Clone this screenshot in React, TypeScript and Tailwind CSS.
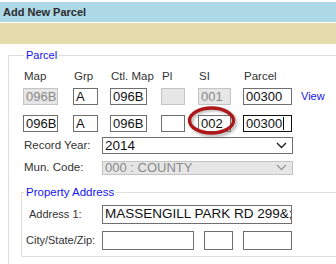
const font = "font-['Liberation_Sans',Arial,sans-serif]"

const cols = [
  'w-[35px]',
  'w-[25px] ml-[15px]',
  'w-[37px] ml-[12px]',
  'w-[24px] ml-[14px]',
  'w-[33px] ml-[13px]',
  'w-[49px] ml-[12px]',
]

/** Text box drawn as a plain div so the caret and borders stay fixed */
function Box({ value, disabled, focused, className = '' }: { value?: string; disabled?: boolean; focused?: boolean; className?: string }) {
  let look = 'bg-white border-[#6f6f6f] text-[#111]'
  if (disabled) look = 'bg-[#e6e6e6] border-[#c4c4c4] text-[#8a8a8a]'
  if (focused) look = 'bg-white border-[#111] text-[#111]'
  return (
    <div className={`flex items-center overflow-hidden whitespace-nowrap border pl-[2px] ${look} ${className}`}>
      {value}
      {focused && <span className="ml-[1px] inline-block h-[13px] w-px bg-black" />}
    </div>
  )
}

function Chevron({ color }: { color: string }) {
  return (
    <svg width="11" height="7" viewBox="0 0 11 7" className="mr-[5px]">
      <path d="M1 1l4.5 4.5L10 1" fill="none" stroke={color} strokeWidth="1.4" />
    </svg>
  )
}

function Select({ value, disabled, className = '' }: { value: string; disabled?: boolean; className?: string }) {
  const look = disabled ? 'bg-[#e6e6e6] border-[#c4c4c4] text-[#8a8a8a]' : 'bg-white border-[#6f6f6f] text-[#111]'
  return (
    <div className={`flex w-[191px] items-center justify-between border pl-[2px] ${look} ${className}`}>
      <span>{value}</span>
      <Chevron color={disabled ? '#9a9a9a' : '#222'} />
    </div>
  )
}

export default function App() {
  return (
    <div className={`relative h-[264px] w-[336px] overflow-hidden bg-white text-[#333] ${font}`}>
      <div className="mt-[2px] flex h-[20px] items-center bg-[#add8e6] pl-[3px] text-[11px] font-bold text-[#2b2b2b]">Add New Parcel</div>
      <div className="mt-[1px] h-[21px] bg-[#e6dcae]" />

      <fieldset className="ml-[8px] mt-[5px] w-[380px] border border-[#dedede] pb-[20px] pl-[12px]">
        <legend className="ml-[3px] px-[2px] text-[11px] leading-[13px] text-[#1414f0]">Parcel</legend>

        <div className="mt-[7px] flex pl-[2px] text-[11.5px] leading-[14px]">
          {['Map', 'Grp', 'Ctl. Map', 'Pl', 'SI', 'Parcel'].map((t, i) => (
            <div key={t} className={`${cols[i]} whitespace-nowrap pl-[1px]`}>
              {t}
            </div>
          ))}
        </div>

        <div className="mt-[5px] flex items-center pl-[2px] text-[13px]">
          <Box className={`${cols[0]} h-[17px]`} value="096B" disabled />
          <Box className={`${cols[1]} h-[17px]`} value="A" />
          <Box className={`${cols[2]} h-[17px]`} value="096B" />
          <Box className={`${cols[3]} h-[17px]`} disabled />
          <Box className={`${cols[4]} h-[17px]`} value="001" disabled />
          <Box className={`${cols[5]} h-[17px]`} value="00300" />
          <span className="ml-[9px] text-[11px] text-[#1414f0]">View</span>
        </div>

        <div className="mt-[10px] flex items-center pl-[2px] text-[13px]">
          <Box className={`${cols[0]} h-[17px]`} value="096B" />
          <Box className={`${cols[1]} h-[17px]`} value="A" />
          <Box className={`${cols[2]} h-[17px]`} value="096B" />
          <Box className={`${cols[3]} h-[17px]`} />
          <Box className={`${cols[4]} h-[17px]`} value="002" />
          <Box className={`${cols[5]} h-[17px]`} value="00300" focused />
        </div>

        <div className="mt-[5px] flex items-center pl-[2px] text-[11.5px]">
          <div className="w-[79px] pl-[1px]">Record Year:</div>
          <Select className="h-[17px] text-[13.5px]" value="2014" />
        </div>

        <div className="mt-[5px] flex items-center pl-[2px] text-[11.5px]">
          <div className="w-[79px] pl-[1px]">Mun. Code:</div>
          <Select className="h-[14px] text-[13px]" value="000 : COUNTY" disabled />
        </div>

        <fieldset className="mt-[9px] w-[360px] border border-[#dedede] pb-[6px]">
          <legend className="ml-[2px] px-[2px] text-[11.5px] leading-[13px] text-[#1414f0]">Property Address</legend>

          <div className="mt-[6px] flex items-center text-[11px]">
            <div className="w-[80px] pl-[7px]">Address 1:</div>
            <Box className="h-[19px] w-[190px] text-[13.5px]" value="MASSENGILL PARK RD 299&;" />
          </div>

          <div className="mt-[7px] flex items-center text-[11px]">
            <div className="w-[80px] pl-[4px]">City/State/Zip:</div>
            <Box className="h-[19px] w-[92px]" />
            <Box className="ml-[10px] h-[19px] w-[29px]" />
            <Box className="ml-[10px] h-[19px] w-[49px]" />
          </div>
        </fieldset>
      </fieldset>

      {/* red marker ring drawn over the SI field */}
      <svg className="pointer-events-none absolute left-[184px] top-[102px]" width="60" height="40" viewBox="0 0 60 40">
        <defs>
          <filter id="ringShadow" x="-20%" y="-20%" width="140%" height="140%">
            <feGaussianBlur stdDeviation="1.6" />
          </filter>
        </defs>
        <ellipse cx="29.5" cy="20.5" rx="22" ry="13" fill="none" stroke="#7a7a7a" strokeWidth="3" opacity="0.6" filter="url(#ringShadow)" />
        <ellipse cx="27.5" cy="18.5" rx="22" ry="12.5" fill="none" stroke="#ad1717" strokeWidth="3.4" />
      </svg>
    </div>
  )
}
